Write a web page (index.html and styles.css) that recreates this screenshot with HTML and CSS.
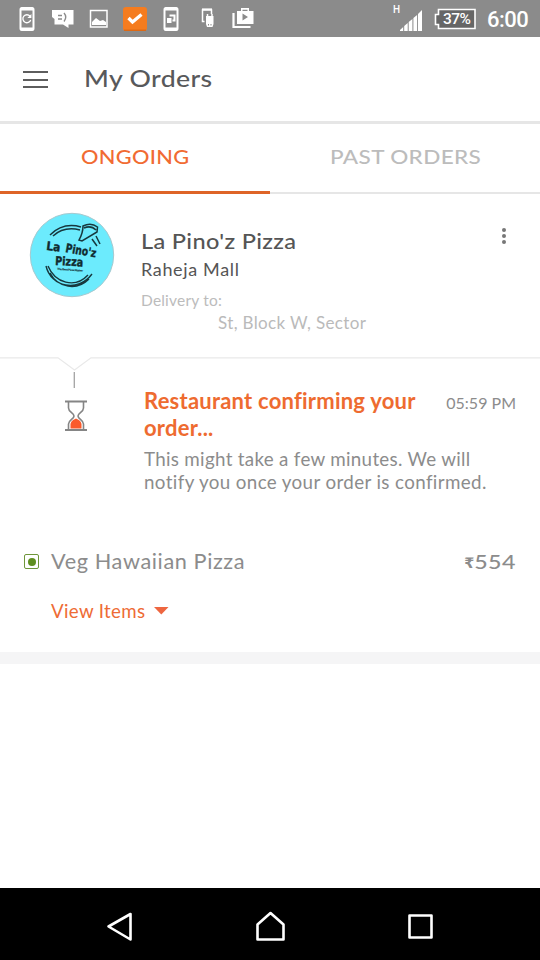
FILE: index.html
```html
<!DOCTYPE html>
<html lang="en">
<head>
<meta charset="utf-8">
<title>My Orders</title>
<link rel="stylesheet" href="styles.css">
</head>
<body>
<div class="screen">
  <div class="status">
    <svg class="status-icons" width="270" height="37" viewBox="0 0 270 37" fill="none" stroke="#fff">
      <rect x="20.5" y="8" width="13" height="22" rx="1.5" stroke-width="2"/><path d="M21 9h12M21 29h12" stroke-width="3"/><path d="M30 16.2a4 4 0 1 0 .7 3.8" stroke-width="1.3"/><path d="M31.4 14v4h-4z" fill="#fff" stroke="none"/>
      <path d="M52 10H73.500V24.500H68.500V28L63 24.500H54.500V19L52 17z" fill="#fff" stroke="none"/><path d="M58 15.500h4M58 19h4M64 13q3.500 4 0 8.500" stroke="#8b8b8b" stroke-width="1.400"/>
      <rect x="90.500" y="10.500" width="16.500" height="16.500" stroke-width="1.500"/><path d="M92 25v-3l4-4 4 3 3-1 3 2v3z" fill="#fff" stroke="none"/>
      <rect x="123" y="7" width="24" height="24" rx="3" fill="#f57c1f" stroke="none"/><path d="M124 30.200h22" stroke="#d96512" stroke-width="1.200"/><path d="M128.500 18l4 4 9-7.500" stroke-width="3.300"/>
      <rect x="164.500" y="8" width="13" height="22" rx="1.500" stroke-width="2"/><path d="M165 9h12M165 29h12" stroke-width="3"/><path d="M169.500 15.500h5v5h-2" stroke-width="2"/><rect x="167" y="18" width="4.500" height="5" fill="#fff" stroke="none"/>
      <path d="M204.500 21.500h-2V10h9v4" stroke-width="1.500"/><path d="M206 16h7.500v8l-1 3h-5.500L206 24z" fill="#fff" stroke="none"/><path d="M207.500 14v2M212 14v2" stroke-width="1.500"/><path d="M202 9.300h10" stroke-width="1.800"/><path d="M208.500 24v1.500M211 24v1.500" stroke="#8b8b8b"/>
      <path d="M233.500 13v14h17" stroke-width="2.200"/><path d="M237 11h4V8h8v3h4.500v13H237z" fill="#fff" stroke="none"/><path d="M242.500 9.800h5V11h-5zM242.500 13.500v7l5.500-3.500z" fill="#8b8b8b" stroke="none"/>
    </svg>
    <div class="status-right">
      <span class="network">H</span>
      <svg class="signal" width="24" height="24" viewBox="0 0 24 24" fill="#fff"><path d="M0 23v-1L3.200 19V23zM4.200 23v-5L7.700 15V23zM8.700 23v-9l3.700-3V23zM13.400 23V10l3.700-3V23zM18 23V6L22 2v21z"/></svg>
      <div class="battery"><svg width="42" height="22" viewBox="0 0 42 22"><path d="M4.500 1.500H41V20.500H4.500V16.500H1.500V6.500H4.500z" fill="#666" stroke="#fff" stroke-width="1.600"/></svg><span class="percent">37%</span></div>
      <span class="clock">6:00</span>
    </div>
  </div>
  <header class="appbar">
    <div class="menu"><i></i><i></i><i></i></div>
    <h1>My Orders</h1>
  </header>
  <nav class="tabs">
    <div class="tab active"><span class="ongoing">ONGOING</span></div>
    <div class="tab"><span class="past">PAST ORDERS</span></div>
  </nav>
  <section class="restaurant">
    <svg class="logo" width="86" height="86" viewBox="0 0 86 86">
      <circle cx="43" cy="43" r="41.700" fill="#6cebfd" stroke="#a5c9cf" stroke-width="1"/>
      <g fill="none" stroke="#17383e" stroke-width="1.500">
        <path d="M21 23Q34 10 52 15M24 24Q35 14 51 18"/>
        <path d="M17 54C22 75 49 81 63 62M19 54C26 71 46 77 59 63M21 61C29 76 48 79 60 67" stroke-width="1.400"/>
        <path d="M54 14q8-4 14.500 1l-.5 5-15 9-3-1q4-7 4-14z M55 16q7-3 12 2M63 27l5 7M67 24l4 8"/>
      </g>
      <g class="brand">
        <text x="17" y="38" textLength="14" lengthAdjust="spacingAndGlyphs" transform="rotate(7 17 38)">La</text>
        <text x="36" y="40" textLength="31" lengthAdjust="spacingAndGlyphs" transform="rotate(10 36 40)">Pino'z</text>
        <text x="26" y="53" textLength="28" lengthAdjust="spacingAndGlyphs" transform="rotate(3 26 53)">Pizza</text>
      </g>
      <text class="motto" x="28" y="58" textLength="26" transform="rotate(4 28 58)">The Best Pizza Maker</text>
    </svg>
    <div class="details">
      <h2>La Pino'z Pizza</h2>
      <p class="branch">Raheja Mall</p>
      <p class="label">Delivery to:</p>
      <p class="address">St, Block W, Sector</p>
    </div>
    <div class="more"><i></i><i></i><i></i></div>
  </section>
  <svg class="divider" width="540" height="32" viewBox="0 0 540 32" fill="none"><path d="M0 .8H58L74.500 13 91 .8H540" stroke="#e9e9e9" stroke-width="1.300"/><path d="M74.300 15v16" stroke="#a3a3a3" stroke-width="1.300"/></svg>
  <section class="progress">
    <svg class="hourglass" width="24" height="32" viewBox="0 0 24 32" fill="none" stroke="#858585"><path d="M1 1.500H23M1 30H23" stroke-width="1.800"/><path d="M4.500 2v6c0 4 5.500 5 5.500 8s-5.500 4-5.500 8v6M19.500 2v6c0 4-5.500 5-5.500 8s5.500 4 5.500 8v6" stroke-width="1.600"/><path d="M6.500 28.500v-4c0-3 3-5 5.500-6 2.500 1 5.500 3 5.500 6v4z" fill="#fa5b2c" stroke="none"/></svg>
    <div class="message">
      <div class="message-head">
        <h3><span class="m1">Restaurant confirming your</span><br><span class="m2">order...</span></h3>
        <time>05:59 PM</time>
      </div>
      <p><span class="p1">This might take a few minutes. We will</span><br><span class="p2">notify you once your order is confirmed.</span></p>
    </div>
  </section>
  <section class="items">
    <div class="item">
      <span class="veg"><i></i></span>
      <span class="item-name">Veg Hawaiian Pizza</span>
      <span class="price"><span class="rupee">₹</span><span class="amount">554</span></span>
    </div>
    <div class="view"><span>View Items</span><svg width="15" height="8" viewBox="0 0 15 8"><path d="M0 0H14.500L7.300 7.500z" fill="#ee6640"/></svg></div>
  </section>
  <div class="band"></div>
  <div class="space"></div>
  <footer class="navbar">
    <svg width="540" height="72" viewBox="0 0 540 72" fill="none" stroke="#fff" stroke-width="2.600" stroke-linejoin="round"><path d="M108.500 38.500L130.500 26V51.500z"/><path d="M270.500 25L283.500 36.500V51.500H257.500V36.500z"/><rect x="409.500" y="27.500" width="22" height="22"/></svg>
  </footer>
</div>
</body>
</html>
```

FILE: styles.css
```css
* { box-sizing: border-box; }
body { margin: 0; background: #fff; font-family: Lato, "Open Sans", sans-serif; color: #555; }
h1, h2, h3, p { margin: 0; font-weight: 500; }
svg { display: block; flex: none; }
span, h1, h2, p, time { white-space: nowrap; }
.screen { width: 540px; height: 960px; display: flex; flex-direction: column; overflow: hidden; background: #fff; }
.status { height: 37px; background: #8b8b8b; color: #fff; display: flex; flex: none; font-family: Roboto, sans-serif; }
.status-right { flex: 1; display: flex; padding-left: 123px; }
.network { width: 7px; font-size: 10px; font-weight: 500; line-height: 12px; padding-top: 4px; }
.signal { margin-top: 8px; }
.battery { display: grid; margin: 8px 0 0 10px; width: 42px; height: 22px; }
.battery > * { grid-area: 1 / 1; }
.percent { font-size: 15.500px; font-weight: 500; line-height: 22px; padding-left: 9px; letter-spacing: -.5px; }
.clock { font-size: 22px; font-weight: 500; line-height: 28px; padding: 6px 0 0 11px; letter-spacing: -.5px; }
.appbar { height: 87px; flex: none; display: flex; border-bottom: 3px solid #e6e6e6; }
.menu { width: 25px; margin: 34px 0 0 23px; display: flex; flex-direction: column; gap: 5.500px; }
.menu i { height: 2px; background: #5d5d5d; }
h1 { margin: 27px 0 0 36px; font-size: 23.500px; line-height: 28px; letter-spacing: .3px; color: #58595b; transform: scaleX(1.135); transform-origin: left; }
.tabs { height: 70px; flex: none; display: flex; }
.tab { width: 270px; border-bottom: 2px solid #e6e6e6; color: #bcbcbc; font-size: 19.500px; font-weight: 500; line-height: 24px; padding: 21px 0 0 60px; }
.tab.active { color: #f16b32; border-bottom: 3px solid #de6428; padding-left: 81px; }
.tab span { display: inline-block; transform-origin: left; letter-spacing: .3px; }
.ongoing { transform: scaleX(1.115); }
.past { transform: scaleX(1.155); }
.restaurant { height: 163px; flex: none; display: flex; }
.logo { margin: 18px 0 0 29px; }
.brand { font: 900 12px "DejaVu Sans", sans-serif; fill: #102b30; stroke: #102b30; stroke-width: .4px; }
.motto { font: 700 3px "DejaVu Sans", sans-serif; fill: #17383e; }
.details { width: 355px; padding: 35px 0 0 26px; }
h2 { font-size: 20.500px; line-height: 24px; letter-spacing: .3px; color: #555; transform: scaleX(1.148); transform-origin: left; }
.branch { margin-top: 5px; font-size: 18px; line-height: 22px; font-weight: 400; letter-spacing: .65px; }
.label { margin-top: 10px; font-size: 15.500px; line-height: 20px; font-weight: 400; color: #bcbcbc; letter-spacing: .2px; }
.address { margin: 3px 0 0 77px; font-size: 17px; line-height: 20px; font-weight: 400; color: #bababa; letter-spacing: .35px; }
.more { width: 5px; margin: 34px 0 0 32px; display: flex; flex-direction: column; gap: 2px; }
.more i { width: 4px; height: 4px; border-radius: 50%; background: #777; }
.progress { height: 159px; flex: none; display: flex; }
.hourglass { margin: 11px 0 0 64px; }
.message { width: 372px; margin-left: 56px; color: #8c8c8c; }
.message-head { display: flex; justify-content: space-between; }
h3 { font-size: 22px; line-height: 27px; font-weight: 700; color: #ee6b30; margin-top: -2px; }
.m1, .m2 { letter-spacing: .22px; }
time { font-size: 16px; line-height: 20px; margin-top: 4px; }
.message p { margin-top: 6px; font-size: 18.800px; line-height: 23px; font-weight: 400; }
.p1 { letter-spacing: .3px; }
.p2 { letter-spacing: .37px; }
.items { height: 104px; flex: none; }
.item { display: flex; height: 26px; line-height: 27px; color: #8c8c8c; font-size: 21.700px; }
.veg { width: 15px; height: 15px; border: 1.500px solid #6f963a; border-radius: 2px; margin: 6px 0 0 24px; display: flex; align-items: center; justify-content: center; }
.veg i { width: 8px; height: 8px; border-radius: 50%; background: #5f8f20; }
.item-name { margin-left: 12px; letter-spacing: .6px; }
.price { margin: 0 24px 0 auto; font-size: 20px; font-weight: 500; display: flex; }
.amount { letter-spacing: .3px; transform: scaleX(1.16); transform-origin: right; }
.rupee { font-family: "DejaVu Sans", sans-serif; font-size: 14.500px; font-weight: 700; line-height: 30px; margin-right: 6px; }
.view { display: flex; gap: 9px; margin: 26px 0 0 51px; font-size: 18.700px; line-height: 22px; color: #ee6b35; letter-spacing: .35px; }
.view svg { margin-top: 7px; }
.band { height: 12px; flex: none; background: #f5f5f6; }
.space { flex: 1; }
.navbar { height: 72px; flex: none; background: #000; }
```
